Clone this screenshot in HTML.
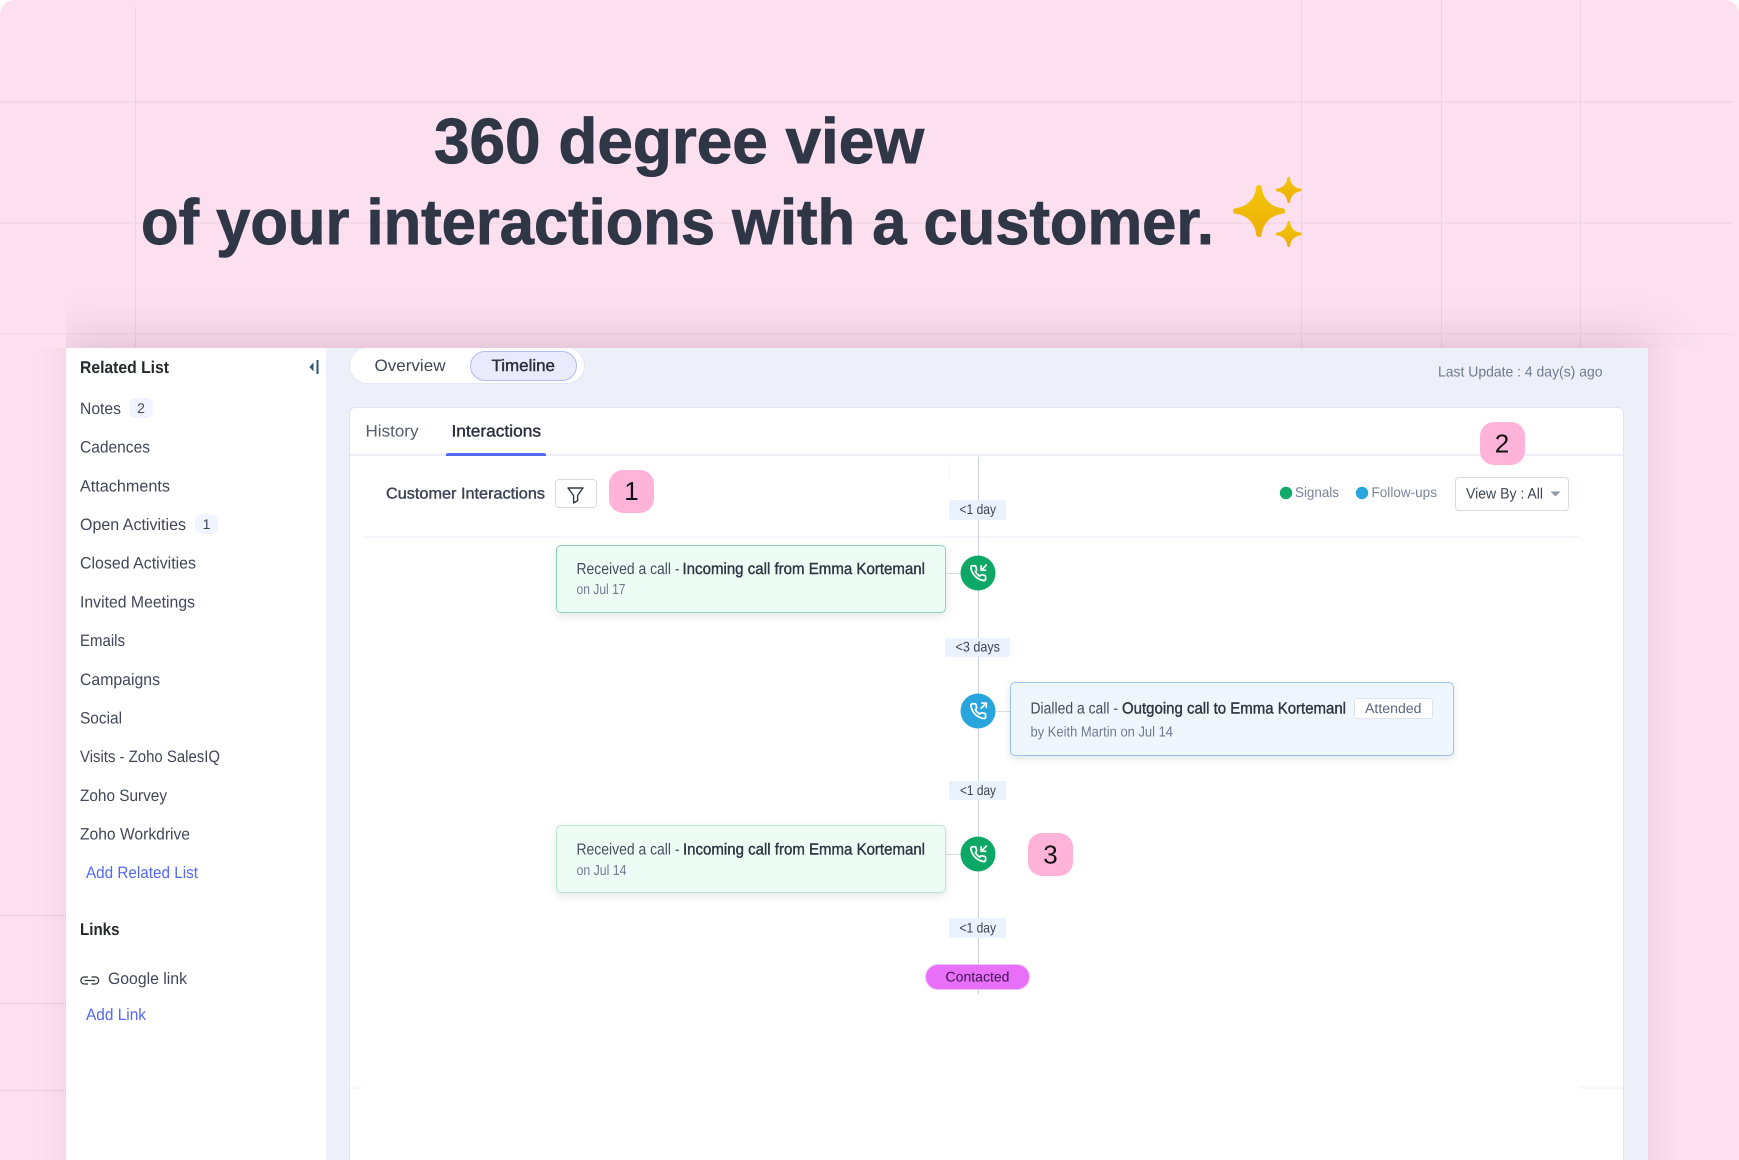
<!DOCTYPE html>
<html lang="en"><head><meta charset="utf-8"><title>360 degree view</title>
<style>
html,body{margin:0;padding:0;width:1739px;height:1160px;overflow:hidden;background:#fff}
.a{position:absolute}
svg{position:absolute;left:0;top:0;font-family:"Liberation Sans",sans-serif;text-rendering:geometricPrecision}
.m{stroke:currentColor;stroke-width:.4}
.s{fill:#404757;color:#404757}
.g{fill:#6f7a92}
.t{fill:#3d4454;font-size:14px}
.c{fill:#454c5c;font-size:16px}
.b{fill:#2f3442;color:#2f3442;font-size:16px}
.n{fill:#111;font-size:26px;text-anchor:middle}
.l{fill:#5468f5}
</style></head><body>
<div class="a" style="left:0;top:0;width:1739px;height:1160px;background:#fde0ef;border-radius:14px 14px 0 0;overflow:hidden">
 <div class="a" style="left:135px;top:7px;width:1px;height:341px;background:#efd2e1"></div>
 <div class="a" style="left:1301px;top:0;width:1px;height:348px;background:#efd2e1"></div>
 <div class="a" style="left:1441px;top:0;width:1px;height:348px;background:#efd2e1"></div>
 <div class="a" style="left:1580px;top:0;width:1px;height:348px;background:#efd2e1"></div>
 <div class="a" style="left:0;top:101px;width:1733px;height:2px;background:#f4d8e7"></div>
 <div class="a" style="left:0;top:222px;width:1733px;height:2px;background:#f4d8e7"></div>
 <div class="a" style="left:0;top:333px;width:1733px;height:2px;background:#f6dbe9"></div>
 <div class="a" style="left:0;top:915px;width:66px;height:1px;background:#ecd0df"></div>
 <div class="a" style="left:0;top:1003px;width:66px;height:1px;background:#ecd0df"></div>
 <div class="a" style="left:0;top:1090px;width:66px;height:1px;background:#ecd0df"></div>
 <div class="a" style="left:66px;top:270px;width:1673px;height:78px;overflow:hidden">
  <div class="a" style="left:0;top:78px;width:1582px;height:400px;box-shadow:0 0 50px 6px rgba(90,40,80,.2)"></div>
 </div>
 <div class="a" style="left:36px;top:348px;width:30px;height:812px;background:linear-gradient(to right,rgba(90,40,80,0),rgba(90,40,80,.045))"></div>
 <div class="a" style="left:1648px;top:348px;width:34px;height:812px;background:linear-gradient(to left,rgba(90,40,80,0),rgba(90,40,80,.06))"></div>
 <!-- panel -->
 <div class="a" style="left:66px;top:348px;width:260px;height:812px;background:#fff"></div>
 <div class="a" style="left:326px;top:348px;width:1322px;height:812px;background:#edf0f9"></div>
 <!-- tab pill -->
 <div class="a" style="left:349px;top:348px;width:236px;height:36px;box-sizing:border-box;background:#fff;border:1px solid #e2e5f3;border-top:0;border-radius:18px"></div>
 <div class="a" style="left:470px;top:351px;width:107px;height:30px;box-sizing:border-box;background:#e9ebfc;border:1px solid #b3bbf2;border-radius:15px"></div>
 <!-- card -->
 <div class="a" style="left:349px;top:407px;width:1275px;height:761px;box-sizing:border-box;background:#fff;border:1px solid #e2e4f2;border-radius:6px"></div>
 <div class="a" style="left:350px;top:454px;width:1273px;height:2px;background:#edeff7"></div>
 <div class="a" style="left:446px;top:453px;width:100px;height:3px;background:#5468f0;border-radius:2px 2px 0 0"></div>
 <div class="a" style="left:362px;top:536px;width:1217px;height:2px;background:#f5f7fc"></div>
 <div class="a" style="left:350px;top:1086px;width:12px;height:3px;background:#f7f9fd"></div>
 <div class="a" style="left:1579px;top:1086px;width:44px;height:3px;background:#f7f9fd"></div>
 <div class="a" style="left:949px;top:457px;width:1px;height:24px;background:#f8f9fa"></div>
 <!-- timeline -->
 <div class="a" style="left:977.5px;top:457px;width:1px;height:537px;background:#cbd2dd"></div>
 <div class="a" style="left:946px;top:573px;width:15px;height:1px;background:#d8dde6"></div>
 <div class="a" style="left:996px;top:711px;width:14px;height:1px;background:#d8dde6"></div>
 <div class="a" style="left:946px;top:854px;width:15px;height:1px;background:#d8dde6"></div>
 <!-- tiles -->
 <div class="a" style="left:949px;top:500px;width:57px;height:20px;background:#eaf2fd;border-radius:2px"></div>
 <div class="a" style="left:945px;top:638px;width:65px;height:19px;background:#eaf2fd;border-radius:2px"></div>
 <div class="a" style="left:949px;top:781px;width:57px;height:19px;background:#eaf2fd;border-radius:2px"></div>
 <div class="a" style="left:949px;top:918px;width:57px;height:20px;background:#eaf2fd;border-radius:2px"></div>
 <div class="a" style="left:925px;top:964px;width:105px;height:26px;box-sizing:border-box;background:#e86ff8;border:1px solid #efc2f8;border-radius:13px"></div>
 <!-- event cards -->
 <div class="a" style="left:556px;top:545px;width:390px;height:68px;box-sizing:border-box;background:#edfdf6;border:1px solid #8ed6b3;border-radius:5px;box-shadow:0 3px 8px rgba(30,50,60,.12)"></div>
 <div class="a" style="left:1010px;top:682px;width:444px;height:74px;box-sizing:border-box;background:#f0f6fe;border:1px solid #98c4ef;border-radius:5px;box-shadow:0 3px 8px rgba(30,50,60,.12)"></div>
 <div class="a" style="left:556px;top:825px;width:390px;height:68px;box-sizing:border-box;background:#edfdf6;border:1px solid #b9e8d1;border-radius:5px;box-shadow:0 3px 8px rgba(30,50,60,.12)"></div>
 <div class="a" style="left:1354px;top:698px;width:79px;height:21px;box-sizing:border-box;background:#fff;border:1px solid #e0e4ea;border-radius:3px"></div>
 <!-- controls -->
 <div class="a" style="left:555px;top:479px;width:42px;height:29px;box-sizing:border-box;background:#fff;border:1px solid #d7dae0;border-radius:4px"></div>
 <div class="a" style="left:1455px;top:477px;width:114px;height:34px;box-sizing:border-box;background:#fff;border:1px solid #d7dae2;border-radius:4px"></div>
 <div class="a" style="left:129px;top:398px;width:24px;height:20px;background:#f0f4fe;border-radius:7px"></div>
 <div class="a" style="left:195px;top:514px;width:23px;height:20px;background:#f0f4fe;border-radius:7px"></div>
 <div class="a" style="left:609px;top:470px;width:45px;height:43px;background:#ffb3d9;border-radius:14px"></div>
 <div class="a" style="left:1480px;top:422px;width:45px;height:43px;background:#ffb3d9;border-radius:14px"></div>
 <div class="a" style="left:1028px;top:833px;width:45px;height:43px;background:#ffb3d9;border-radius:14px"></div>
</div>

<svg width="1739" height="1160" viewBox="0 0 1739 1160" xmlns="http://www.w3.org/2000/svg">
<defs>
<linearGradient id="sp" x1="0" y1="0" x2="0" y2="1"><stop offset="0" stop-color="#f2c707"/><stop offset="1" stop-color="#edae09"/></linearGradient>
<clipPath id="cl"><rect x="1200" y="150" width="101.5" height="120"/></clipPath>
<path id="star" d="M-3-22Q-3-26 0-26Q3-26 3-22C4.500-12 12-4.500 22-3Q26-3 26 0Q26 3 22 3C12 4.500 4.500 12 3 22Q3 26 0 26Q-3 26-3 22C-4.500 12-12 4.500-22 3Q-26 3-26 0Q-26-3-22-3C-12-4.500-4.500-12-3-22Z"/>
</defs>

<!-- heading -->
<g font-weight="700" font-size="64" fill="#2f3747" stroke="#2f3747" stroke-width=".9">
<text x="434" y="163" textLength="490" lengthAdjust="spacingAndGlyphs">360 degree view</text>
<text x="141" y="244" textLength="1073" lengthAdjust="spacingAndGlyphs">of your interactions with a customer.</text>
</g>
<g fill="url(#sp)">
<use href="#star" transform="translate(1259 211)"/>
<g clip-path="url(#cl)">
<use href="#star" transform="translate(1288.7 190) scale(.5)"/>
<use href="#star" transform="translate(1288.7 234) scale(.5)"/>
</g>
</g>

<!-- sidebar -->
<text x="80" y="373" font-size="17" font-weight="700" fill="#26282e" textLength="89" lengthAdjust="spacingAndGlyphs">Related List</text>
<path d="M309.500 367L313.500 362.500V371.500Z" fill="#2d5670"/><rect x="316.500" y="360" width="2" height="14" fill="#2d5670"/>
<g font-size="16.5" class="s">
<text x="80" y="414" textLength="41" lengthAdjust="spacingAndGlyphs">Notes</text>
<text x="141" y="413" font-size="14" text-anchor="middle">2</text>
<text x="80" y="452.7" textLength="70" lengthAdjust="spacingAndGlyphs">Cadences</text>
<text x="80" y="491.5" textLength="90" lengthAdjust="spacingAndGlyphs">Attachments</text>
<text x="80" y="530" textLength="106" lengthAdjust="spacingAndGlyphs">Open Activities</text>
<text x="206.500" y="529" font-size="14" text-anchor="middle">1</text>
<text x="80" y="568.7" textLength="116" lengthAdjust="spacingAndGlyphs">Closed Activities</text>
<text x="80" y="607.5" textLength="115" lengthAdjust="spacingAndGlyphs">Invited Meetings</text>
<text x="80" y="646" textLength="45" lengthAdjust="spacingAndGlyphs">Emails</text>
<text x="80" y="685" textLength="80" lengthAdjust="spacingAndGlyphs">Campaigns</text>
<text x="80" y="723.5" textLength="42" lengthAdjust="spacingAndGlyphs">Social</text>
<text x="80" y="762" textLength="140" lengthAdjust="spacingAndGlyphs">Visits - Zoho SalesIQ</text>
<text x="80" y="801" textLength="87" lengthAdjust="spacingAndGlyphs">Zoho Survey</text>
<text x="80" y="839.5" textLength="110" lengthAdjust="spacingAndGlyphs">Zoho Workdrive</text>
<text x="108" y="984" textLength="79" lengthAdjust="spacingAndGlyphs">Google link</text>
</g>
<g font-size="16.5" class="l">
<text x="86" y="878" textLength="112" lengthAdjust="spacingAndGlyphs">Add Related List</text>
<text x="86" y="1020" textLength="60" lengthAdjust="spacingAndGlyphs">Add Link</text>
</g>
<text x="80" y="935" font-size="17" font-weight="700" fill="#26282e" textLength="39.5" lengthAdjust="spacingAndGlyphs">Links</text>
<g fill="none" stroke="#30343c" stroke-width="1.2">
<path d="M88 977H84.300a3.500 3.500 0 0 0 0 7H88"/><path d="M91.500 977H95.200a3.500 3.500 0 0 1 0 7H91.500"/><path d="M84.500 980.500H95"/>
</g>

<!-- top tabs -->
<text x="374.5" y="371" font-size="16.5" fill="#404757" textLength="71" lengthAdjust="spacingAndGlyphs">Overview</text>
<text x="491.5" y="371" font-size="16.5" fill="#2a2f3d" color="#2a2f3d" class="m" textLength="63.5" lengthAdjust="spacingAndGlyphs">Timeline</text>
<text x="1438" y="376.5" font-size="14.5" class="g" textLength="164.5" lengthAdjust="spacingAndGlyphs">Last Update : 4 day(s) ago</text>
<text x="365.5" y="436.5" font-size="16.5" fill="#565d6c" textLength="53" lengthAdjust="spacingAndGlyphs">History</text>
<text x="451.5" y="436.5" font-size="16.5" fill="#2a2f3d" color="#2a2f3d" class="m" textLength="89.5" lengthAdjust="spacingAndGlyphs">Interactions</text>
<text x="386" y="498.5" font-size="15.5" fill="#3c4352" color="#3c4352" class="m" textLength="159" lengthAdjust="spacingAndGlyphs">Customer Interactions</text>
<path d="M568 488H583L577.600 495.500V500.600L573.600 503V495.500Z" fill="none" stroke="#333a46" stroke-width="1.4" stroke-linejoin="round"/>

<text class="n" x="631.5" y="500">1</text>
<text class="n" x="1502" y="452.5">2</text>
<text class="n" x="1050.5" y="863.5">3</text>

<!-- legend -->
<circle cx="1286" cy="493" r="6.200" fill="#0fa968"/>
<circle cx="1362" cy="493" r="6.200" fill="#27a5dc"/>
<text x="1295" y="497" font-size="14" fill="#7a849a" textLength="44" lengthAdjust="spacingAndGlyphs">Signals</text>
<text x="1371.5" y="497" font-size="14" fill="#7a849a" textLength="65.5" lengthAdjust="spacingAndGlyphs">Follow-ups</text>
<text x="1466" y="498.5" font-size="15" fill="#3f4656" textLength="77" lengthAdjust="spacingAndGlyphs">View By : All</text>
<path d="M1550.500 491.500H1560.500L1555.500 496.500Z" fill="#9098a8"/>

<!-- tile labels -->
<g class="t">
<text x="959.5" y="514" textLength="36.5" lengthAdjust="spacingAndGlyphs">&lt;1 day</text>
<text x="955.5" y="651.5" textLength="44.5" lengthAdjust="spacingAndGlyphs">&lt;3 days</text>
<text x="960" y="795" textLength="36" lengthAdjust="spacingAndGlyphs">&lt;1 day</text>
<text x="959.5" y="932.5" textLength="36.5" lengthAdjust="spacingAndGlyphs">&lt;1 day</text>
</g>
<text x="945.5" y="981.5" font-size="14" fill="#3b1250" textLength="64" lengthAdjust="spacingAndGlyphs">Contacted</text>

<!-- card 1 -->
<text class="c" x="576.5" y="574" textLength="103" lengthAdjust="spacingAndGlyphs">Received a call -</text>
<text class="b m" x="682.5" y="574" textLength="242.5" lengthAdjust="spacingAndGlyphs">Incoming call from Emma Kortemanl</text>
<text class="g" x="576.5" y="594" font-size="14.5" textLength="49" lengthAdjust="spacingAndGlyphs">on Jul 17</text>
<!-- card 2 -->
<text class="c" x="1030.5" y="713.5" textLength="87.5" lengthAdjust="spacingAndGlyphs">Dialled a call -</text>
<text class="b m" x="1122" y="713.5" textLength="224" lengthAdjust="spacingAndGlyphs">Outgoing call to Emma Kortemanl</text>
<text x="1365" y="713" font-size="14" fill="#5d6780" textLength="56.5" lengthAdjust="spacingAndGlyphs">Attended</text>
<text class="g" x="1030.5" y="736.5" font-size="14.5" textLength="142.5" lengthAdjust="spacingAndGlyphs">by Keith Martin on Jul 14</text>
<!-- card 3 -->
<text class="c" x="576.5" y="854.5" textLength="103" lengthAdjust="spacingAndGlyphs">Received a call -</text>
<text class="b m" x="683" y="854.5" textLength="242" lengthAdjust="spacingAndGlyphs">Incoming call from Emma Kortemanl</text>
<text class="g" x="576.5" y="875" font-size="14.5" textLength="50" lengthAdjust="spacingAndGlyphs">on Jul 14</text>

<!-- circles -->
<g>
<circle cx="978" cy="573" r="17.500" fill="#0ea866"/>
<circle cx="978" cy="711" r="17.500" fill="#27a5dc"/>
<circle cx="978" cy="854" r="17.500" fill="#0ea866"/>
</g>
<defs>
<path id="ph" d="M22 16.92v3a2 2 0 0 1-2.18 2 19.79 19.79 0 0 1-8.63-3.07 19.5 19.5 0 0 1-6-6 19.79 19.79 0 0 1-3.07-8.67A2 2 0 0 1 4.11 2h3a2 2 0 0 1 2 1.72 12.84 12.84 0 0 0 .7 2.81 2 2 0 0 1-.45 2.11L8.09 9.91a16 16 0 0 0 6 6l1.27-1.27a2 2 0 0 1 2.11-.45 12.84 12.84 0 0 0 2.81.7A2 2 0 0 1 22 16.92z"/>
</defs>
<g fill="none" stroke="#fff" stroke-width="2.300" stroke-linecap="round" stroke-linejoin="round">
<g transform="translate(969.3 564.3) scale(.74)"><use href="#ph"/><path d="M16 2V8H22M23 1L16 8"/></g>
<g transform="translate(969.3 702.3) scale(.74)"><use href="#ph"/><path d="M23 7V1H17M16 8L23 1"/></g>
<g transform="translate(969.3 845.3) scale(.74)"><use href="#ph"/><path d="M16 2V8H22M23 1L16 8"/></g>
</g>
</svg>
</body></html>
